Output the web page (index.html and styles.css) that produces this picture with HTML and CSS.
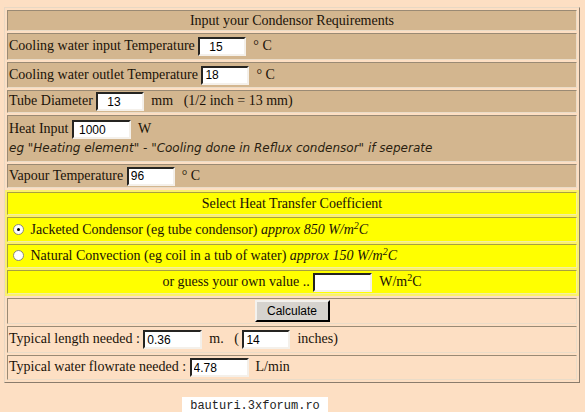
FILE: index.html
```html
<!DOCTYPE html>
<html>
<head>
<meta charset="utf-8">
<link rel="stylesheet" href="styles.css">
</head>
<body>
<div class="outer">
  <table class="sect tan">
    <tr class="h21"><td class="center">Input your Condensor Requirements</td></tr>
    <tr class="h27"><td>Cooling water input Temperature <input class="w48 pad" value="15"> &nbsp;° C</td></tr>
    <tr class="h26"><td>Cooling water outlet Temperature <input class="w48" value="18"> &nbsp;° C</td></tr>
    <tr class="h23"><td>Tube Diameter <input class="w48 pad" value="13"> &nbsp;mm &nbsp;&nbsp;(1/2 inch = 13 mm)</td></tr>
    <tr class="h47"><td>Heat Input <input class="w58 pad2" value="1000"> &nbsp;W<br><span class="note">eg "Heating element" - "Cooling done in Reflux condensor" if seperate</span></td></tr>
    <tr class="h24"><td>Vapour Temperature <input class="w48" value="96"> &nbsp;° C</td></tr>
  </table>
  <table class="sect yel">
    <tr class="h23"><td class="center">Select Heat Transfer Coefficient</td></tr>
    <tr class="h25"><td><span class="radio on"></span> Jacketed Condensor (eg tube condensor) <i>approx 850 W/m<sup>2</sup>C</i></td></tr>
    <tr class="h24"><td><span class="radio"></span> Natural Convection (eg coil in a tub of water) <i>approx 150 W/m<sup>2</sup>C</i></td></tr>
    <tr class="h24"><td class="center">or guess your own value .. <input class="w58" value=""> &nbsp;W/m<sup>2</sup>C</td></tr>
  </table>
  <table class="sect peach">
    <tr class="h26"><td class="center"><button class="calc">Calculate</button></td></tr>
    <tr class="h27"><td>Typical length needed : <input class="w58" value="0.36"> &nbsp;m. &nbsp;&nbsp;( <input class="w48" value="14"> &nbsp;inches)</td></tr>
    <tr class="h25"><td>Typical water flowrate needed : <input class="w58" value="4.78"> &nbsp;L/min</td></tr>
  </table>
</div>
<div class="footer">bauturi.3xforum.ro</div>
</body>
</html>
```
FILE: styles.css
```css
html, body {
  background: #fddfc3;
}
body {
  margin: 7px 0 0 4px;
  font-family: "Liberation Serif", "Times New Roman", serif;
  font-size: 14px;
  color: #1a1208;
}
.outer {
  width: 574px;
  border: 1px solid;
  border-color: #e8d8c4 #8a7c6c #8a7c6c #e8d8c4;
}
.sect {
  width: 100%;
  border-collapse: separate;
  border-spacing: 2px;
}
.sect td {
  padding: 0 1px;
  border: 1px solid;
  border-color: #9a8a74 #eadcc8 #eadcc8 #9a8a74;
  vertical-align: middle;
}
.tan td { background: #d3b68f; }
.yel { background: #fbf16a; }
.yel td {
  background: #ffff00;
  border-color: #a8a040 #f4f0a0 #f4f0a0 #a8a040;
}
.peach td { background: #fddfc3; }
.center { text-align: center; }
.h21 { height: 21px; }
.h23 { height: 23px; }
.h24 { height: 24px; }
.h25 { height: 25px; }
.h26 { height: 26px; }
.h27 { height: 27px; }
.h47 { height: 47px; }
input {
  font-family: "Liberation Sans", Arial, sans-serif;
  font-size: 12px;
  height: 19px;
  box-sizing: border-box;
  padding: 0 2px;
  margin: 0;
  border: 2px inset;
  border-color: #7a746c #f4f0ea #f4f0ea #7a746c;
  background: #fff;
  color: #000;
  vertical-align: middle;
}
input.pad { padding-left: 9px; }
input.pad2 { padding-left: 5px; }
.w48 { width: 48px; }
.w58 { width: 59px; }
.note {
  font-family: "DejaVu Sans", Verdana, sans-serif;
  font-style: italic;
  font-size: 12px;
  line-height: 18px;
  color: #2a1e10;
}
sup {
  font-size: 10px;
  line-height: 0;
  vertical-align: 5px;
}
i { font-style: italic; }
.radio {
  display: inline-block;
  width: 11px;
  height: 11px;
  box-sizing: border-box;
  border-radius: 50%;
  border: 1px solid #8a8878;
  background: #fff;
  margin: 0 3px 0 4px;
  vertical-align: -1px;
  position: relative;
}
.radio.on::after {
  content: "";
  position: absolute;
  left: 3px;
  top: 3px;
  width: 3px;
  height: 3px;
  border-radius: 50%;
  background: #000;
}
.calc {
  font-family: "Liberation Sans", Arial, sans-serif;
  font-size: 12px;
  width: 75px;
  height: 22px;
  background: #d6d3ce;
  border: 2px outset;
  border-color: #f4f2ee #3a3a3a #3a3a3a #f4f2ee;
  padding: 0;
  color: #000;
}
.footer {
  margin: 14px 0 0 178px;
  width: 146px;
  height: 18px;
  background: #fff;
  font-family: "Liberation Mono", "DejaVu Sans Mono", monospace;
  font-size: 12px;
  line-height: 18px;
  text-align: center;
  color: #222;
}
```
